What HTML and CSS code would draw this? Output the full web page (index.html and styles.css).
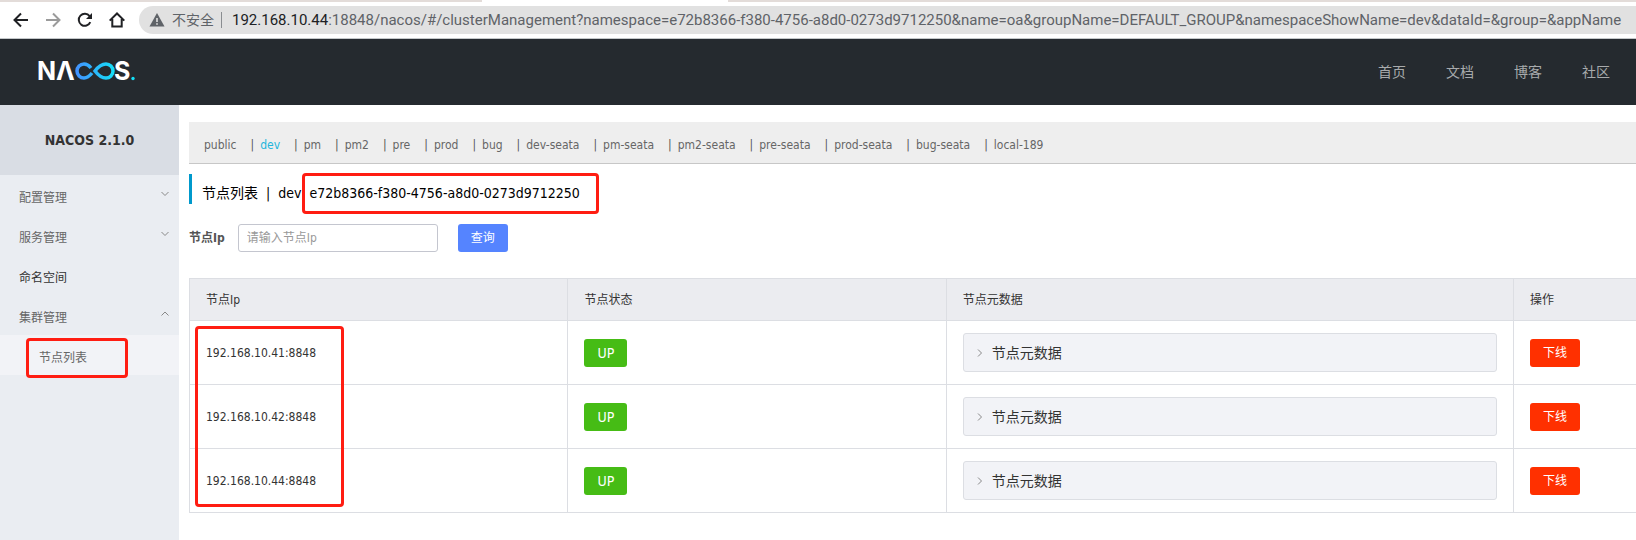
FILE: index.html
```html
<!DOCTYPE html>
<html lang="zh-CN">
  <head>
    <meta charset="UTF-8" />
    <title>Nacos</title>
    <link rel="stylesheet" href="styles.css">
  </head>
  <body>
    <div class="tabstrip"><div class="tab-active"></div></div>
    <div class="toolbar">
      <button class="tool" aria-label="后退">
        <svg width="16" height="16" viewBox="0 0 16 16"><path d="M15 8H2M8 1.5L1.5 8L8 14.5" /></svg>
      </button>
      <button class="tool disabled" aria-label="前进">
        <svg width="16" height="16" viewBox="0 0 16 16"><path d="M1 8H14M8 1.5L14.5 8L8 14.5" /></svg>
      </button>
      <button class="tool" aria-label="刷新">
        <svg width="16" height="16" viewBox="0 0 16 16"><path d="M13.3 10.2A6 6 0 1 1 12.6 4.2" /><path class="fill" d="M15 1V7H9Z" /></svg>
      </button>
      <button class="tool" aria-label="主页">
        <svg width="16" height="16" viewBox="0 0 16 16"><path d="M.7 8.6L8 1.5L15.3 8.6M3.3 7V14.6H12.7V7" /></svg>
      </button>
      <div class="address">
        <svg width="16" height="14" viewBox="0 0 16 14"><path fill="#5f6368" d="M8 0L15.5 13.5H.5Z" /><path fill="#e1e1e1" d="M7.2 5H8.8V9H7.2ZM7.2 10.2H8.8V11.8H7.2Z" /></svg>
        <span class="unsafe">不安全</span>
        <span class="url"><b>192.168.10.44</b>:18848/nacos/#/clusterManagement?namespace=e72b8366-f380-4756-a8d0-0273d9712250&amp;name=oa&amp;groupName=DEFAULT_GROUP&amp;namespaceShowName=dev&amp;dataId=&amp;group=&amp;appName</span>
      </div>
    </div>

    <header class="header">
      <a href="#" class="logo" aria-label="NACOS">
        <svg width="100" height="32" viewBox="-2 -6 100 32">
          <defs>
            <linearGradient id="loop" gradientUnits="userSpaceOnUse" x1="36" y1="0" x2="76" y2="0">
              <stop offset="0" stop-color="#4590ff" />
              <stop offset="1" stop-color="#12e0f8" />
            </linearGradient>
          </defs>
          <text x="-2" y="18">N</text>
          <text x="17" y="18">Λ</text>
          <g fill="none" stroke="url(#loop)" stroke-width="3.500">
            <path d="M52 6C50 3.500 48 2 45 2A7 7 0 0 0 45 16C49 16 51 13.500 53 11" />
            <path d="M56 9C59 5 62 2 67 2A7 7 0 0 1 67 16C62 16 59 13 56 9Z" />
          </g>
          <text x="75" y="18">S</text>
          <circle cx="94" cy="16.500" r="1.700" fill="#12e0f8" />
        </svg>
      </a>
      <nav class="nav">
        <a href="#">首页</a>
        <a href="#">文档</a>
        <a href="#">博客</a>
        <a href="#">社区</a>
      </nav>
    </header>

    <div class="page">
      <aside class="sidebar">
        <h1>NACOS 2.1.0</h1>
        <ul class="menu">
          <li><a href="#">配置管理<svg width="8" height="6" viewBox="0 0 8 6"><path d="M.5 1L4 4.500L7.500 1" /></svg></a></li>
          <li><a href="#">服务管理<svg width="8" height="6" viewBox="0 0 8 6"><path d="M.5 1L4 4.500L7.500 1" /></svg></a></li>
          <li><a href="#" class="single">命名空间</a></li>
          <li><a href="#">集群管理<svg width="8" height="6" viewBox="0 0 8 6"><path d="M.5 4.500L4 1L7.500 4.500" /></svg></a></li>
          <li class="sub"><a href="#">节点列表</a><i class="mark mark-menu"></i></li>
        </ul>
      </aside>

      <main class="main">
        <div class="namespaces">
          <a href="#">public</a>
          <a href="#" class="active">dev</a>
          <a href="#">pm</a>
          <a href="#">pm2</a>
          <a href="#">pre</a>
          <a href="#">prod</a>
          <a href="#">bug</a>
          <a href="#">dev-seata</a>
          <a href="#">pm-seata</a>
          <a href="#">pm2-seata</a>
          <a href="#">pre-seata</a>
          <a href="#">prod-seata</a>
          <a href="#">bug-seata</a>
          <a href="#">local-189</a>
        </div>

        <h2 class="title">
          <span>节点列表</span><span>|</span><span>dev</span>
          <span class="ns-id">e72b8366-f380-4756-a8d0-0273d9712250<i class="mark mark-id"></i></span>
        </h2>

        <form class="search">
          <label for="ip">节点Ip</label>
          <input id="ip" type="text" placeholder="请输入节点Ip" />
          <button type="button" class="btn">查询</button>
        </form>

        <div class="table-wrap">
          <table>
            <thead>
              <tr>
                <th class="col-ip">节点Ip</th>
                <th class="col-state">节点状态</th>
                <th class="col-meta">节点元数据</th>
                <th>操作</th>
              </tr>
            </thead>
            <tbody>
              <tr>
                <td>192.168.10.41:8848</td>
                <td><span class="tag">UP</span></td>
                <td><button class="collapse"><svg width="6" height="8" viewBox="0 0 6 8"><path d="M1 .5L4.500 4L1 7.500" /></svg>节点元数据</button></td>
                <td><button class="btn offline">下线</button></td>
              </tr>
              <tr>
                <td>192.168.10.42:8848</td>
                <td><span class="tag">UP</span></td>
                <td><button class="collapse"><svg width="6" height="8" viewBox="0 0 6 8"><path d="M1 .5L4.500 4L1 7.500" /></svg>节点元数据</button></td>
                <td><button class="btn offline">下线</button></td>
              </tr>
              <tr>
                <td>192.168.10.44:8848</td>
                <td><span class="tag">UP</span></td>
                <td><button class="collapse"><svg width="6" height="8" viewBox="0 0 6 8"><path d="M1 .5L4.500 4L1 7.500" /></svg>节点元数据</button></td>
                <td><button class="btn offline">下线</button></td>
              </tr>
            </tbody>
          </table>
          <i class="mark mark-ips"></i>
        </div>
      </main>
    </div>
  </body>
</html>
```
FILE: styles.css
```css
* {
  box-sizing: border-box;
  margin: 0;
  padding: 0;
}
body {
  min-height: 100vh;
  display: flex;
  flex-direction: column;
  overflow: hidden;
  background: #fff;
  color: #333;
  font: 12px/20px "DejaVu Sans Condensed", "Noto Sans CJK SC", sans-serif;
}
a {
  color: inherit;
  text-decoration: none;
}
button,
input {
  font: inherit;
}
button {
  border: 0;
  cursor: pointer;
}

/* browser bar */
.tabstrip {
  height: 2px;
  padding-left: 482px;
  background: #e3dcd9;
}
.tab-active {
  width: 246px;
  height: 2px;
  background: #fff;
}
.toolbar {
  display: flex;
  align-items: center;
  gap: 16px;
  height: 37px;
  padding-left: 13px;
  border-bottom: 1px solid #c4c8ca;
}
.tool {
  display: flex;
  flex: none;
  background: none;
}
.tool path {
  fill: none;
  stroke: #202124;
  stroke-width: 2;
}
.tool .fill {
  fill: #202124;
  stroke: none;
}
.disabled path {
  stroke: #9b9b9b;
}
.address {
  display: flex;
  flex: 1;
  align-items: center;
  min-width: 0;
  height: 28px;
  margin-left: -2px;
  padding-left: 10px;
  border-radius: 14px 0 0 14px;
  background: #e1e1e1;
  color: #5f6368;
  font: 14px/20px "Noto Sans", "Noto Sans CJK SC", sans-serif;
  white-space: nowrap;
  overflow: hidden;
}
.unsafe {
  margin-left: 7px;
  padding-right: 7px;
  border-right: 1px solid #8a8d91;
  line-height: 16px;
}
.url {
  margin-left: 10px;
  font-family: Roboto, sans-serif;
  font-size: 15px;
}
.url b {
  color: #202124;
  font-weight: normal;
}

.header {
  display: flex;
  align-items: center;
  justify-content: space-between;
  height: 66px;
  padding: 0 26px 0 37px;
  background: #252a2f;
}
.logo svg {
  display: block;
}
.logo text {
  fill: #fff;
  font: 700 25px Inter, sans-serif;
}
.nav {
  display: flex;
  gap: 40px;
  color: #a8aaac;
  font-size: 14px;
}

.page {
  display: flex;
  flex: 1;
}
.sidebar {
  flex: none;
  width: 179px;
  background: #eaedf2;
}
.sidebar h1 {
  background: #d9dde4;
  font-size: 14px;
  line-height: 70px;
  text-align: center;
}
.menu {
  list-style: none;
  color: #666;
}
.menu a {
  display: flex;
  align-items: center;
  justify-content: space-between;
  height: 40px;
  padding: 6px 10px 0 19px;
}
.menu .single {
  color: #333;
}
.menu .sub {
  position: relative;
  background: #f2f3f7;
}
.menu .sub a {
  padding-left: 39px;
}
.menu path,
.collapse path {
  fill: none;
  stroke: #888;
}
.menu svg {
  margin-bottom: 8px;
}

.main {
  flex: 1;
  min-width: 0;
  padding: 17px 0 0 10px;
}
.namespaces {
  display: flex;
  height: 42px;
  padding: 13px 15px 0;
  border-bottom: 1px solid #c7c7c7;
  background: #eee;
  color: #666;
}
.namespaces a + a {
  margin-left: 14px;
}
.namespaces a + a::before {
  content: "|";
  margin-right: 6px;
  color: #555;
}
.namespaces .active {
  color: #1fb6dc;
}
.title {
  display: flex;
  gap: 8px;
  margin-top: 10px;
  padding-left: 10px;
  border-left: 3px solid #0099cc;
  color: #000;
  font-size: 14px;
  font-weight: normal;
  line-height: 30px;
  height: 30px;
  padding-top: 4px;
}
.ns-id {
  position: relative;
}

.search {
  display: flex;
  align-items: center;
  margin: 20px 0 26px;
}
.search label {
  color: #555;
  font-weight: bold;
}
.search input {
  width: 200px;
  height: 28px;
  margin: 0 20px 0 13px;
  padding: 0 8px;
  border: 1px solid #c4c6cf;
  border-radius: 3px;
  color: #333;
}
.search input::placeholder {
  color: #999;
}
.btn {
  height: 28px;
  padding: 0 13px;
  border-radius: 3px;
  background: #5584ff;
  color: #fff;
}
.offline {
  display: block;
  background: #ff3000;
}

.table-wrap {
  position: relative;
}
table {
  width: 100%;
  table-layout: fixed;
  border-collapse: separate;
  border-spacing: 0;
  border-top: 1px solid #dcdee3;
}
th,
td {
  padding: 12px 16px;
  border-bottom: 1px solid #dcdee3;
  border-left: 1px solid #dcdee3;
  text-align: left;
  vertical-align: middle;
}
th {
  height: 42px;
  padding: 0 16px;
  background: #ebecf0;
  font-weight: normal;
}
.col-ip,
.col-state {
  width: 26.15%;
}
.col-meta {
  width: 39.2%;
}
.tag {
  display: block;
  width: 43px;
  border-radius: 3px;
  background: #46bc15;
  color: #fff;
  font-size: 14px;
  line-height: 28px;
  text-align: center;
}
.collapse {
  display: flex;
  align-items: center;
  gap: 9px;
  width: 100%;
  height: 39px;
  padding: 0 13px;
  border: 1px solid #dcdee3;
  border-radius: 3px;
  background: #f2f3f7;
  color: #333;
  font-size: 14px;
}

/* red marks over the page */
.mark {
  position: absolute;
  border: 3px solid #ff1d12;
  border-radius: 4px;
}
.mark-menu {
  left: 26px;
  top: 3px;
  width: 102px;
  height: 40px;
}
.mark-id {
  left: -7px;
  top: -5px;
  width: 297px;
  height: 41px;
}
.mark-ips {
  left: 6px;
  top: 48px;
  width: 149px;
  height: 181px;
}
```
